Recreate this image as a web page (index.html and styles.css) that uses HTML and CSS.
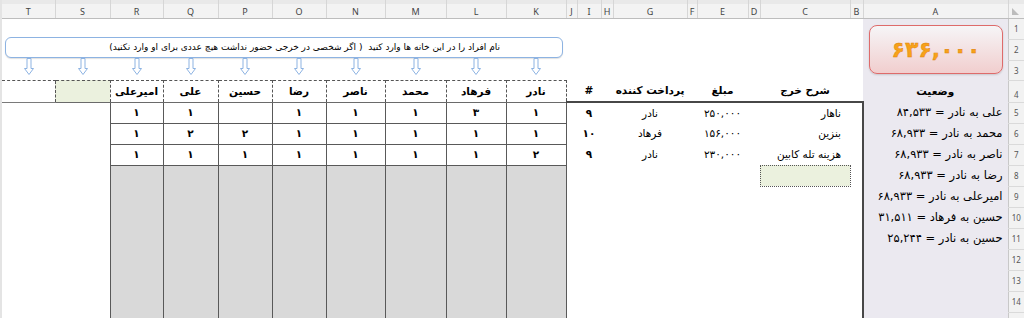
FILE: index.html
```html
<!DOCTYPE html>
<html lang="fa">
<head>
<meta charset="utf-8">
<title>Sheet</title>
<link rel="stylesheet" href="styles.css">
</head>
<body>
<div class="app">
  <div class="edge"></div>
  <div class="sheet-wrap">
    <table class="sheet">
      <colgroup>
        <col class="wT"><col class="wS"><col class="wR"><col class="wQ"><col class="wP"><col class="wO"><col class="wN"><col class="wM"><col class="wL"><col class="wK">
        <col class="wJ"><col class="wI"><col class="wH"><col class="wG"><col class="wF"><col class="wE"><col class="wD"><col class="wC"><col class="wB"><col class="wA"><col class="wRn">
      </colgroup>
      <thead>
        <tr class="hdr">
          <th>T</th><th>S</th><th>R</th><th>Q</th><th>P</th><th>O</th><th>N</th><th>M</th><th>L</th><th>K</th>
          <th>J</th><th>I</th><th>H</th><th>G</th><th>F</th><th>E</th><th>D</th><th>C</th><th>B</th><th>A</th>
          <th class="corner"><span class="tri"></span></th>
        </tr>
      </thead>
      <tbody>
        <tr class="h21"><td colspan="19"></td><td class="a"></td><td class="rn">1</td></tr>
        <tr class="h21"><td colspan="19"></td><td class="a"></td><td class="rn">2</td></tr>
        <tr class="h20"><td colspan="19"></td><td class="a"></td><td class="rn">3</td></tr>
        <tr class="h22">
          <td class="hd-t"></td>
          <td class="hd hd-s"></td>
          <td class="hd">امیرعلی</td><td class="hd">علی</td><td class="hd">حسین</td><td class="hd">رضا</td><td class="hd">ناصر</td><td class="hd">محمد</td><td class="hd">فرهاد</td><td class="hd">نادر</td>
          <td class="mh"></td><td class="mh">#</td><td class="mh"></td><td class="mh">پرداخت کننده</td><td class="mh"></td><td class="mh">مبلغ</td><td class="mh"></td><td class="mh">شرح خرج</td><td class="mh"></td>
          <td class="a a-h">وضعیت</td><td class="rn rn4">4</td>
        </tr>
        <tr class="h21">
          <td></td><td></td>
          <td class="v">۱</td><td class="v">۱</td><td class="v"></td><td class="v">۱</td><td class="v">۱</td><td class="v">۱</td><td class="v">۳</td><td class="v">۱</td>
          <td></td><td class="num">۹</td><td></td><td class="nm">نادر</td><td></td><td class="amt">۲۵۰,۰۰۰</td><td></td><td class="desc">ناهار</td><td></td>
          <td class="a at">علی به نادر = ۸۴,۵۳۳</td><td class="rn">5</td>
        </tr>
        <tr class="h21">
          <td></td><td></td>
          <td class="v">۱</td><td class="v">۲</td><td class="v">۲</td><td class="v">۱</td><td class="v">۱</td><td class="v">۱</td><td class="v">۱</td><td class="v">۱</td>
          <td></td><td class="num">۱۰</td><td></td><td class="nm">فرهاد</td><td></td><td class="amt">۱۵۶,۰۰۰</td><td></td><td class="desc">بنزین</td><td></td>
          <td class="a at">محمد به نادر = ۶۸,۹۳۳</td><td class="rn">6</td>
        </tr>
        <tr class="h21">
          <td></td><td></td>
          <td class="v">۱</td><td class="v">۱</td><td class="v">۱</td><td class="v">۱</td><td class="v">۱</td><td class="v">۱</td><td class="v">۱</td><td class="v">۲</td>
          <td></td><td class="num">۹</td><td></td><td class="nm">نادر</td><td></td><td class="amt">۲۳۰,۰۰۰</td><td></td><td class="desc">هزینه تله کابین</td><td></td>
          <td class="a at">ناصر به نادر = ۶۸,۹۳۳</td><td class="rn">7</td>
        </tr>
        <tr class="h21">
          <td></td><td></td>
          <td class="g"></td><td class="g"></td><td class="g"></td><td class="g"></td><td class="g"></td><td class="g"></td><td class="g"></td><td class="g"></td>
          <td colspan="7"></td><td class="grn"></td><td></td>
          <td class="a at">رضا به نادر = ۶۸,۹۳۳</td><td class="rn">8</td>
        </tr>
        <tr class="h21">
          <td></td><td></td>
          <td class="g"></td><td class="g"></td><td class="g"></td><td class="g"></td><td class="g"></td><td class="g"></td><td class="g"></td><td class="g"></td>
          <td colspan="9"></td>
          <td class="a at">امیرعلی به نادر = ۶۸,۹۳۳</td><td class="rn">9</td>
        </tr>
        <tr class="h21">
          <td></td><td></td>
          <td class="g"></td><td class="g"></td><td class="g"></td><td class="g"></td><td class="g"></td><td class="g"></td><td class="g"></td><td class="g"></td>
          <td colspan="9"></td>
          <td class="a at">حسین به فرهاد = ۳۱,۵۱۱</td><td class="rn">10</td>
        </tr>
        <tr class="h21">
          <td></td><td></td>
          <td class="g"></td><td class="g"></td><td class="g"></td><td class="g"></td><td class="g"></td><td class="g"></td><td class="g"></td><td class="g"></td>
          <td colspan="9"></td>
          <td class="a at">حسین به نادر = ۲۵,۲۴۴</td><td class="rn">11</td>
        </tr>
        <tr class="h21">
          <td></td><td></td>
          <td class="g"></td><td class="g"></td><td class="g"></td><td class="g"></td><td class="g"></td><td class="g"></td><td class="g"></td><td class="g"></td>
          <td colspan="9"></td>
          <td class="a at"></td><td class="rn">12</td>
        </tr>
        <tr class="h21">
          <td></td><td></td>
          <td class="g"></td><td class="g"></td><td class="g"></td><td class="g"></td><td class="g"></td><td class="g"></td><td class="g"></td><td class="g"></td>
          <td colspan="9"></td>
          <td class="a at"></td><td class="rn">13</td>
        </tr>
        <tr class="h21">
          <td></td><td></td>
          <td class="g"></td><td class="g"></td><td class="g"></td><td class="g"></td><td class="g"></td><td class="g"></td><td class="g"></td><td class="g"></td>
          <td colspan="9"></td>
          <td class="a at"></td><td class="rn">14</td>
        </tr>
        <tr class="h21">
          <td></td><td></td>
          <td class="g"></td><td class="g"></td><td class="g"></td><td class="g"></td><td class="g"></td><td class="g"></td><td class="g"></td><td class="g"></td>
          <td colspan="9"></td>
          <td class="a at"></td><td class="rn"></td>
        </tr>
      </tbody>
    </table>

    <div class="note">نام افراد را در این خانه ها وارد کنید&nbsp; ( اگر شخصی در خرجی حضور نداشت هیچ عددی برای او وارد نکنید)</div>

    <div class="arrows">
      <div class="arr wT"><svg width="12" height="17" viewBox="0 0 12 17"><path d="M4 0.5H8V10.5H10.5L6 16.5L1.5 10.5H4Z" fill="#fff" stroke="#8db3e2"/></svg></div>
      <div class="arr wS"><svg width="12" height="17" viewBox="0 0 12 17"><path d="M4 0.5H8V10.5H10.5L6 16.5L1.5 10.5H4Z" fill="#fff" stroke="#8db3e2"/></svg></div>
      <div class="arr wR"><svg width="12" height="17" viewBox="0 0 12 17"><path d="M4 0.5H8V10.5H10.5L6 16.5L1.5 10.5H4Z" fill="#fff" stroke="#8db3e2"/></svg></div>
      <div class="arr wQ"><svg width="12" height="17" viewBox="0 0 12 17"><path d="M4 0.5H8V10.5H10.5L6 16.5L1.5 10.5H4Z" fill="#fff" stroke="#8db3e2"/></svg></div>
      <div class="arr wP"><svg width="12" height="17" viewBox="0 0 12 17"><path d="M4 0.5H8V10.5H10.5L6 16.5L1.5 10.5H4Z" fill="#fff" stroke="#8db3e2"/></svg></div>
      <div class="arr wO"><svg width="12" height="17" viewBox="0 0 12 17"><path d="M4 0.5H8V10.5H10.5L6 16.5L1.5 10.5H4Z" fill="#fff" stroke="#8db3e2"/></svg></div>
      <div class="arr wN"><svg width="12" height="17" viewBox="0 0 12 17"><path d="M4 0.5H8V10.5H10.5L6 16.5L1.5 10.5H4Z" fill="#fff" stroke="#8db3e2"/></svg></div>
      <div class="arr wM"><svg width="12" height="17" viewBox="0 0 12 17"><path d="M4 0.5H8V10.5H10.5L6 16.5L1.5 10.5H4Z" fill="#fff" stroke="#8db3e2"/></svg></div>
      <div class="arr wL"><svg width="12" height="17" viewBox="0 0 12 17"><path d="M4 0.5H8V10.5H10.5L6 16.5L1.5 10.5H4Z" fill="#fff" stroke="#8db3e2"/></svg></div>
      <div class="arr wK"><svg width="12" height="17" viewBox="0 0 12 17"><path d="M4 0.5H8V10.5H10.5L6 16.5L1.5 10.5H4Z" fill="#fff" stroke="#8db3e2"/></svg></div>
    </div>

    <div class="total">۶۳۶,۰۰۰</div>
  </div>
</div>
</body>
</html>
```
FILE: styles.css
```css
html, body {
  margin: 0;
  padding: 0;
  background: #ffffff;
  width: 1024px;
  height: 318px;
  overflow: hidden;
}

.app {
  display: flex;
  width: 1024px;
  height: 318px;
  overflow: hidden;
}

.edge {
  width: 2px;
  flex: none;
  background: #e4e4e4;
}

.sheet-wrap {
  position: relative;
  width: 1022px;
  flex: none;
}

.sheet {
  border-collapse: collapse;
  table-layout: fixed;
  width: 1022px;
  font-family: "DejaVu Sans", sans-serif;
  font-size: 10.5px;
  color: #000;
}

/* column widths */
.wT { width: 53px; }
.wS { width: 55px; }
.wR { width: 53px; }
.wQ { width: 55px; }
.wP { width: 54px; }
.wO { width: 54px; }
.wN { width: 59px; }
.wM { width: 61px; }
.wL { width: 60px; }
.wK { width: 60px; }
.wJ { width: 11px; }
.wI { width: 24px; }
.wH { width: 12px; }
.wG { width: 74px; }
.wF { width: 10px; }
.wE { width: 51px; }
.wD { width: 12px; }
.wC { width: 90px; }
.wB { width: 13px; }
.wA { width: 145px; }
.wRn { width: 16px; }

/* row heights */
.hdr { height: 18px; }
.h20 { height: 20px; }
.h21 { height: 21px; }
.h22 { height: 22px; }

.sheet th {
  padding: 0 0 1px 0;
  font-family: "Noto Sans", sans-serif;
  font-size: 9px;
  font-weight: normal;
  color: #444;
  line-height: 11px;
  vertical-align: bottom;
  text-align: center;
  background: linear-gradient(#e9e9e9 0, #e9e9e9 4px, #f3f3f3 4px);
  border-right: 1px solid #d6d6d6;
  border-bottom: 1px solid #bdbdbd;
}

.sheet th.corner {
  position: relative;
  border-right: none;
}

.tri {
  position: absolute;
  left: 3px;
  bottom: 3px;
  width: 0;
  height: 0;
  border-left: 7px solid #bcbcbc;
  border-top: 7px solid transparent;
}

.sheet td {
  padding: 0;
  text-align: center;
  vertical-align: middle;
  white-space: nowrap;
  line-height: 13px;
}

/* left table: header names */
.hd-t {
  border-top: 1px dashed #555;
  border-bottom: 1px solid #7a7a7a;
}

.hd {
  border: 1px dashed #555;
  border-bottom: 1px solid #6a6a6a;
  font-weight: bold;
  font-size: 10.5px;
}

.hd-s {
  background: #ebf1de;
}

/* left table: values */
.v {
  border: 1px solid #595959;
  font-weight: bold;
}

.g {
  background: #d9d9d9;
  border-left: 1px solid #595959;
  border-right: 1px solid #595959;
}

/* middle table */
.mh {
  border-bottom: 2px solid #474747;
  font-weight: bold;
}

.num {
  font-weight: bold;
}

.desc {
  direction: rtl;
  text-align: right !important;
  padding-right: 9px !important;
}

.grn {
  background: #ebf1de;
  border: 1px dotted #555;
}

/* column A */
.a {
  background: #ebe9f0;
}

.a-h {
  font-weight: bold;
}

.at {
  border-left: 2px solid #474747;
  direction: rtl;
  text-align: right !important;
  padding-right: 5px !important;
  font-size: 11.5px;
}

/* row numbers */
.rn {
  background: #f2f2f2;
  border-left: 1px solid #c8c8c8;
  border-bottom: 1px solid #dadada;
  font-family: "Noto Sans", sans-serif;
  font-size: 8px;
  color: #555;
}

.rn4 {
  vertical-align: bottom !important;
  padding-bottom: 1px !important;
}

/* overlays (shapes floating over the sheet) */
.note {
  position: absolute;
  left: 3px;
  top: 37px;
  width: 558px;
  height: 21px;
  box-sizing: border-box;
  border: 1px solid #8db3e2;
  border-radius: 6px;
  background: #ffffff;
  box-shadow: 0 1px 1px rgba(0, 0, 0, 0.12);
  direction: rtl;
  text-align: right;
  padding-right: 62px;
  font-family: "DejaVu Sans", sans-serif;
  font-size: 9px;
  line-height: 19px;
  white-space: nowrap;
}

.arrows {
  position: absolute;
  left: 0;
  top: 58px;
  display: flex;
}

.arr {
  display: flex;
  justify-content: center;
  height: 17px;
}

.arr svg {
  display: block;
}

.total {
  position: absolute;
  left: 867px;
  top: 25px;
  width: 134px;
  height: 49px;
  box-sizing: border-box;
  border: 1px solid #de6b6b;
  border-radius: 8px;
  background: linear-gradient(#f6f5f7, #f1cece);
  box-shadow: 0 1px 2px rgba(0, 0, 0, 0.15);
  display: flex;
  align-items: center;
  justify-content: center;
  font-family: "DejaVu Sans", sans-serif;
  font-weight: bold;
  font-size: 22px;
  color: #f7a21a;
  -webkit-text-stroke: 0.4px #e0800a;
}
```
